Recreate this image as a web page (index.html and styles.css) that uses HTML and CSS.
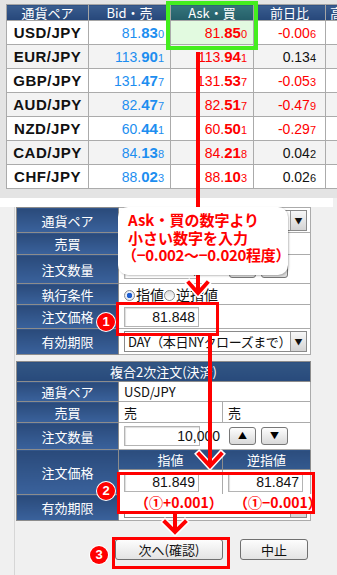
FILE: index.html
```html
<!doctype html>
<html>
<head>
<meta charset="utf-8">
<title>注文手順</title>
<link rel="stylesheet" href="styles.css">
</head>
<body>
<div class="top">
	<table class="rates">
		<colgroup><col class="c1"><col class="c2"><col class="c3"><col class="c4"><col class="c5"></colgroup>
		<tr><th>通貨ペア</th><th>Bid・売</th><th class="ask">Ask・買</th><th>前日比</th><th class="cut">高値</th></tr>
		<tr><td class="pair">USD/JPY</td><td class="bid">81.<b>83</b><small>0</small></td><td class="askv hl">81.<b>85</b><small>0</small></td><td class="chg neg">-0.00<small>6</small></td><td></td></tr>
		<tr class="alt"><td class="pair">EUR/JPY</td><td class="bid">113.<b>90</b><small>1</small></td><td class="askv">113.<b>94</b><small>1</small></td><td class="chg">0.13<small>4</small></td><td></td></tr>
		<tr><td class="pair">GBP/JPY</td><td class="bid">131.<b>47</b><small>7</small></td><td class="askv">131.<b>53</b><small>7</small></td><td class="chg neg">-0.05<small>3</small></td><td></td></tr>
		<tr class="alt"><td class="pair">AUD/JPY</td><td class="bid">82.<b>47</b><small>7</small></td><td class="askv">82.<b>51</b><small>7</small></td><td class="chg neg">-0.47<small>9</small></td><td></td></tr>
		<tr><td class="pair">NZD/JPY</td><td class="bid">60.<b>44</b><small>1</small></td><td class="askv">60.<b>50</b><small>1</small></td><td class="chg neg">-0.29<small>7</small></td><td></td></tr>
		<tr class="alt"><td class="pair">CAD/JPY</td><td class="bid">84.<b>13</b><small>8</small></td><td class="askv">84.<b>21</b><small>8</small></td><td class="chg">0.04<small>2</small></td><td></td></tr>
		<tr><td class="pair">CHF/JPY</td><td class="bid">88.<b>02</b><small>3</small></td><td class="askv">88.<b>10</b><small>3</small></td><td class="chg">0.02<small>6</small></td><td></td></tr>
	</table>
</div>
<div class="strip"></div>
<div class="panel">
	<table class="form">
		<colgroup><col class="lab"><col class="va"><col class="vb"></colgroup>
		<tr class="h25"><th>通貨ペア</th><td colspan="2"><div class="select"><span></span><i class="dd">▼</i></div></td></tr>
		<tr class="h22"><th>売買</th><td colspan="2"></td></tr>
		<tr class="h29"><th>注文数量</th><td colspan="2"><div class="qtyrow"><div class="box qty"><span>10,000</span></div><span class="step">▲</span><span class="step">▼</span></div></td></tr>
		<tr class="h20"><th>執行条件</th><td colspan="2" class="opts"><span class="radio on"></span>指値<span class="radio"></span>逆指値</td></tr>
		<tr class="h24"><th>注文価格</th><td colspan="2"><div class="box price">81.848</div></td></tr>
		<tr class="h26"><th>有効期限</th><td colspan="2"><div class="select"><span>DAY（本日NYクローズまで）</span><i class="dd">▼</i></div></td></tr>
	</table>
	<table class="form second">
		<colgroup><col class="lab"><col class="va"><col class="vb"></colgroup>
		<tr class="h18"><th colspan="3" class="cap">複合2次注文(決済)</th></tr>
		<tr class="h20"><th>通貨ペア</th><td colspan="2">USD/JPY</td></tr>
		<tr class="h21"><th>売買</th><td>売</td><td>売</td></tr>
		<tr class="h27"><th>注文数量</th><td colspan="2"><div class="qtyrow"><div class="box qty"><span>10,000</span></div><span class="step">▲</span><span class="step">▼</span></div></td></tr>
		<tr class="h16"><th rowspan="2">注文価格</th><th class="sub">指値</th><th class="sub">逆指値</th></tr>
		<tr class="h25"><td><div class="box price">81.849</div></td><td><div class="box price">81.847</div></td></tr>
		<tr class="h26"><th>有効期限</th><td colspan="2"><div class="select"><span></span><i class="dd"></i></div></td></tr>
	</table>
	<div class="actions">
		<span class="btn next">次へ(確認)</span>
		<span class="btn stop">中止</span>
	</div>
</div>

<svg class="arrows" width="337" height="575" viewBox="0 0 337 575">
	<g fill="none" stroke="#fff" stroke-width="7" stroke-linecap="square">
		<polyline points="189,283 198,293 207,283"/>
		<polyline points="199,454 210,466 221,454"/>
		<polyline points="165,522 175,532 185,522"/>
	</g>
	<g fill="none" stroke="#f00" stroke-width="4">
		<line x1="198" y1="52" x2="198" y2="292"/>
		<line x1="210" y1="336" x2="210" y2="465"/>
		<line x1="175" y1="514" x2="175" y2="531"/>
	</g>
	<g fill="none" stroke="#f00" stroke-width="4" stroke-linecap="square">
		<polyline points="189,283 198,293 207,283"/>
		<polyline points="199,454 210,466 221,454"/>
		<polyline points="165,522 175,532 185,522"/>
	</g>
</svg>
<div class="green"></div>
<div class="redbox b1"></div>
<div class="redbox b2"></div>
<div class="redbox b3"></div>
<div class="note n1">（①+0.001）</div>
<div class="note n2">（①−0.001）</div>
<span class="num m1">1</span>
<span class="num m2">2</span>
<span class="num m3">3</span>
<div class="callout">Ask・買の数字より<br>小さい数字を入力<br><span class="paren">（−0.002〜−0.020程度）</span></div>
</body>
</html>
```

FILE: styles.css
```css
*{margin:0; padding:0; box-sizing:border-box;}
body{width:337px; height:575px; overflow:hidden; position:relative; background:#f0f0f0; font-family:"Noto Sans CJK JP","Liberation Sans",sans-serif;}

.top{height:198px; background:#e4e4e4; padding:4px 0 0 6px; overflow:hidden;}
.rates{border-collapse:collapse; table-layout:fixed; width:389px;}
.rates .c1{width:82px;} .rates .c2{width:82px;} .rates .c3{width:83px;} .rates .c4{width:72px;} .rates .c5{width:70px;}
.rates th{height:16px; background:linear-gradient(#3a5d8f,#26477a); color:#fff; font-weight:normal; font-size:13px; line-height:14px; border:1px solid #a5a5a5;}
.rates th.ask{background:linear-gradient(#35757c,#245e68);}
.rates th.cut{text-align:left; padding-left:4px;}
.rates td{height:24px; background:#fff; border:1px solid #ababab; font-family:"Liberation Sans",sans-serif; font-size:14px; text-align:right; padding-right:6px; white-space:nowrap;}
.rates tr.alt td{background:#f3f3f3;}
.rates td.pair{text-align:center; padding:0; font-weight:bold; font-size:15px; color:#111; letter-spacing:.5px;}
.rates td b{font-size:15px;}
.rates td small{font-size:11px;}
.rates td.bid{color:#1d8ef0;}
.rates td.askv{color:#f00;}
.rates td.hl{background:#e2fae0;}
.rates td.chg{color:#111; padding-right:9px;}
.rates td.neg{color:#f00;}

.strip{height:9px; background:#fff; margin-right:4px;}
.panel{border-left:1px solid #d6d6d6; margin-left:14px; padding-left:1px; height:368px;}

.form{border-collapse:collapse; table-layout:fixed; width:294px; background:#fff; font-size:13px;}
.form .lab{width:102px;} .form .va{width:104px;} .form .vb{width:88px;}
.form th{background:linear-gradient(#2a4a7a,#3a629c); color:#fff; font-weight:normal; border:1px solid #8c8c8c; text-align:center;}
.form td{border:1px solid #ababab; padding-left:5px; color:#111;}
.form th.cap{background:linear-gradient(#325684,#284a7b);}
.form th.sub{background:linear-gradient(#2c4d7d,#33598f);}
.second{margin-top:6px;}
.h16{height:16px;} .h18{height:18px;} .h20{height:20px;} .h21{height:21px;} .h22{height:22px;}
.h24{height:24px;} .h25{height:25px;} .h26{height:26px;} .h27{height:27px;} .h29{height:29px;}

.box{background:#fff; border:1px solid #b4b4b4; box-shadow:inset 1px 1px 1px #ddd; height:20px; line-height:18px; text-align:right; padding-right:3px; font-family:"Liberation Sans",sans-serif; font-size:14px; color:#111;}
.price{width:75px;}
.qtyrow{display:flex; align-items:center; gap:5px;}
.qty{width:76px; white-space:nowrap;}
.qty span{display:inline-block; margin-right:-24px;}
.step{margin-left:24px; width:27px; height:18px; border:1px solid #777; border-radius:3px; background:linear-gradient(#fdfdfd,#d9d9d9); font-size:9px; line-height:16px; text-align:center; color:#000;}
.step + .step{margin-left:0;}

.select{display:flex; align-items:center; justify-content:space-between; width:183px; height:21px; border:1px solid #8a8a8a; background:#fff; font-size:13px; padding-left:3px;}
.select span{white-space:nowrap; overflow:hidden; letter-spacing:-.4px;}
.dd{flex:none; width:16px; height:19px; font-style:normal; font-size:8px; line-height:19px; text-align:center; border-left:1px solid #999; background:linear-gradient(#f8f8f8,#d4d4d4);}

.radio{display:inline-block; width:11px; height:11px; border-radius:50%; border:1px solid #8a8a8a; background:linear-gradient(#ddd,#fff); vertical-align:-1px; margin-right:1px;}
.radio.on{background:radial-gradient(circle,#1f5fd0 0 2.5px,#e8eef8 3px);}
.opts{font-size:14px;}

.actions{display:flex; margin:18px 0 0 99px; gap:17px;}
.btn{display:block; height:21px; border:1px solid #707070; border-radius:3px; background:linear-gradient(#fdfdfd,#e3e3e3); font-size:13px; line-height:19px; text-align:center; color:#111;}
.next{width:108px;}
.stop{width:68px;}

.arrows{position:absolute; top:0; left:0;}
.green{position:absolute; left:166px; top:1px; width:92px; height:49px; border:4px solid #44ee1e;}
.redbox{position:absolute; border:3px solid #f00;}
.b1{left:116px; top:302px; width:103px; height:34px;}
.b2{left:117px; top:472px; width:198px; height:42px;}
.b3{left:112px; top:537px; width:118px; height:32px;}
.note{position:absolute; top:494px; height:17px; background:#fff; color:#f00; font-weight:bold; font-size:14px; line-height:17px; white-space:nowrap;}
.n1{left:120px; width:100px; padding-left:15px;}
.n2{left:220px; width:92px; padding-left:14px;}
.num{position:absolute; width:18px; height:18px; border-radius:50%; background:#f00; color:#fff; font-family:"Liberation Sans",sans-serif; font-weight:bold; font-size:13px; line-height:18px; text-align:center; box-shadow:0 0 0 1px #fff;}
.m1{left:97px; top:313px;}
.m2{left:97px; top:482px;}
.m3{left:90px; top:546px;}

.callout{position:absolute; left:118px; top:207px; width:170px; height:68px; background:#fff; border-radius:10px; box-shadow:1px 1px 2px rgba(0,0,0,.25); padding:4px 0 0 10px; color:#f00; font-weight:bold; font-size:15px; line-height:17.5px; white-space:nowrap;}
.callout .paren{margin-left:-6px; letter-spacing:-.3px;}
```
